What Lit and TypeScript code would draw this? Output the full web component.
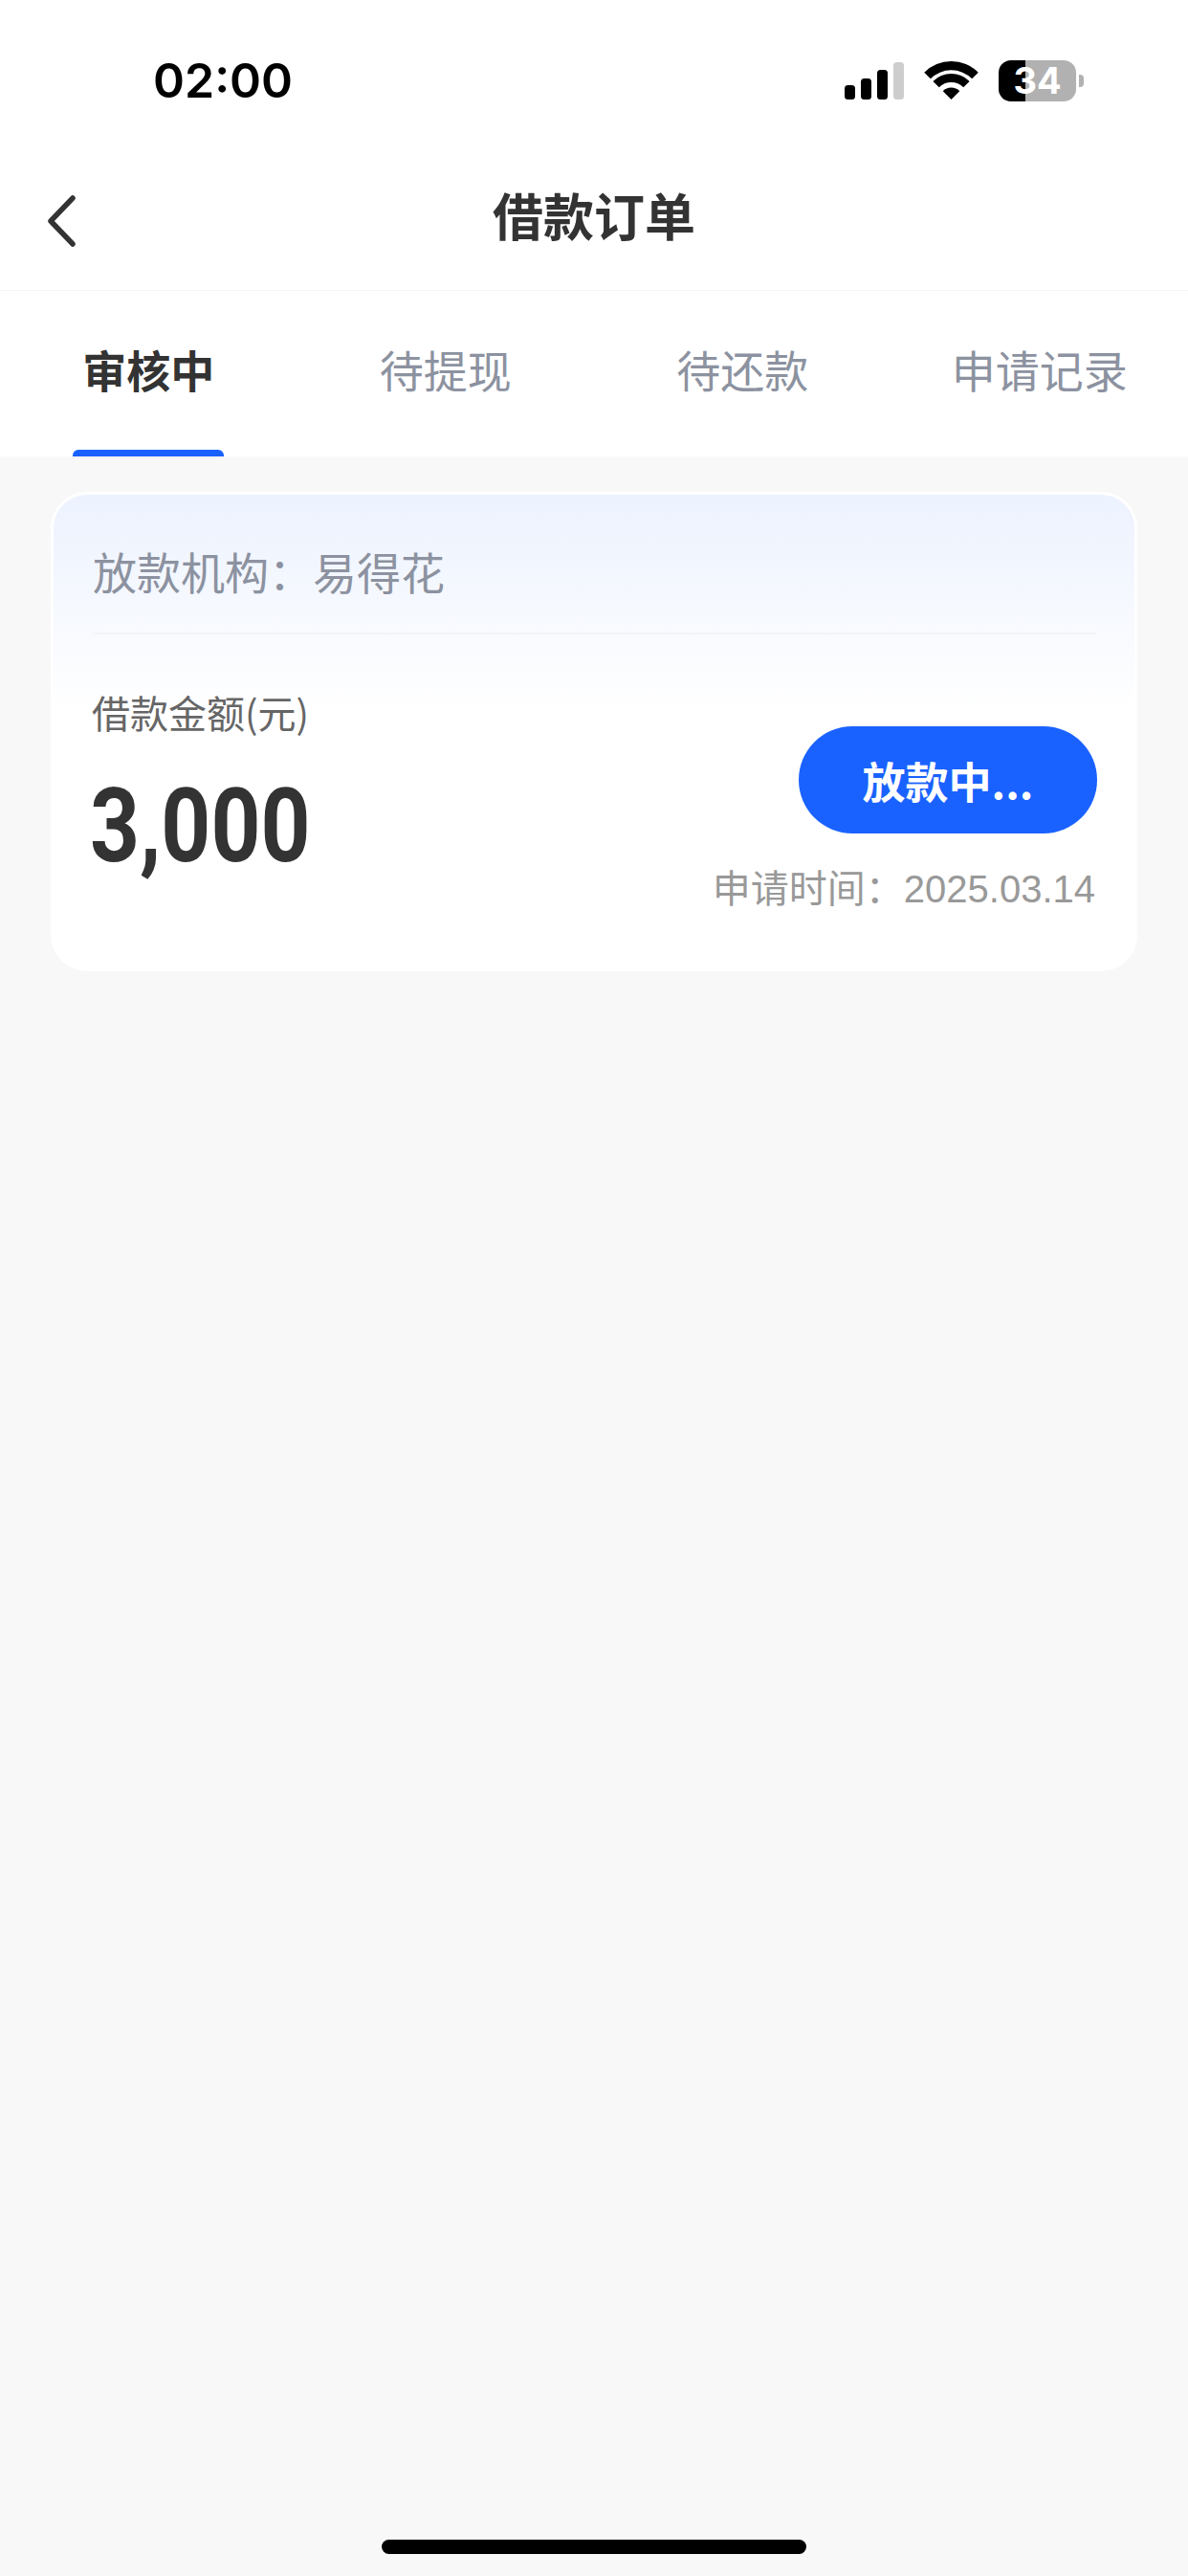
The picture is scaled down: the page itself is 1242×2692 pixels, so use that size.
import { LitElement, html, css, svg } from "lit";
import { customElement } from "lit/decorators.js";

const CJK = `"Noto Sans CJK SC", "Liberation Sans", sans-serif`;

@customElement("app-root")
export class AppRoot extends LitElement {
  static styles = css`
    :host {
      display: block;
      width: 1242px;
      font-family: "Liberation Sans", "Noto Sans CJK SC", sans-serif;
    }
    .page {
      width: 1242px;
      height: 2692px;
      display: flex;
      flex-direction: column;
      background: #f8f8f8;
    }
    .top { background: #fff; }
    .status {
      height: 152px;
      box-sizing: border-box;
      padding: 16px 109px 0 160px;
      display: flex;
      align-items: center;
      justify-content: space-between;
    }
    .time {
      font-family: Inter, sans-serif;
      font-size: 50px;
      font-weight: 600;
      line-height: 1;
      color: #000;
    }
    .sys { display: flex; align-items: center; gap: 22px; }
    .signal { display: flex; align-items: flex-end; gap: 6px; height: 39px; }
    .signal i { display: block; width: 11px; background: #000; border-radius: 3.5px; }
    .signal i.off { background: #cdcdcd; }
    .wifi { display: block; overflow: visible; }
    .batt { display: flex; align-items: center; gap: 3px; }
    .cell {
      width: 81px;
      height: 43px;
      border-radius: 13px;
      background: linear-gradient(90deg, #000 28px, #b1b1b1 28px);
      color: #fff;
      font-family: Inter, sans-serif;
      font-size: 38px;
      font-weight: 700;
      line-height: 43px;
      text-align: center;
    }
    .nub { width: 5px; height: 13px; background: #b1b1b1; border-radius: 0 4px 4px 0; }
    .nav {
      height: 151px;
      display: grid;
      grid-template-columns: 1fr auto 1fr;
      align-items: center;
      padding-left: 48px;
      padding-right: 48px;
      border-bottom: 1px solid #f5f5f5;
    }
    .back { display: block; margin-top: 6px; }
    .title {
      font-family: ${css([CJK] as any)};
      font-size: 53px;
      font-weight: 700;
      color: #333;
      line-height: 1;
      margin-bottom: 6px;
    }
    .tabs { display: flex; height: 173px; }
    .tab {
      position: relative;
      flex: 1;
      display: flex;
      align-items: center;
      justify-content: center;
      padding-bottom: 11px;
      box-sizing: border-box;
      font-family: ${css([CJK] as any)};
      font-size: 46px;
      color: #8c92a0;
    }
    .tab.on { color: #333; font-weight: 700; }
    .tab.on::after {
      content: "";
      position: absolute;
      left: 76px;
      width: 158px;
      bottom: 0;
      height: 7px;
      background: #1a62ff;
      border-radius: 6px 6px 0 0;
    }
    .main { flex: 1; padding: 37px 53px 0 53px; }
    .card {
      height: 501px;
      box-sizing: border-box;
      border: 3px solid #fff;
      border-radius: 38px;
      background: linear-gradient(180deg, #ecf2fe 0, #fff 46%);
      background-origin: border-box;
      padding: 0 39px 0 41px;
      display: flex;
      flex-direction: column;
    }
    .org {
      height: 146px;
      box-sizing: border-box;
      border-bottom: 2px solid #f2f4f8;
      display: flex;
      align-items: center;
      padding-top: 13px;
      font-family: ${css([CJK] as any)};
      font-size: 46px;
      color: #8c92a0;
    }
    .body { flex: 1; display: flex; justify-content: space-between; }
    .amt { padding-top: 53px; }
    .lbl {
      font-family: ${css([CJK] as any)};
      font-size: 40px;
      line-height: 56px;
      color: #666;
      margin-left: -1px;
    }
    .num {
      font-family: Roboto, sans-serif;
      font-size: 108px;
      font-weight: 700;
      line-height: 110px;
      margin-top: 36px;
      color: #333;
      transform: scaleX(0.84);
      transform-origin: left center;
      margin-left: -3px;
    }
    .side { display: flex; flex-direction: column; align-items: flex-end; padding-top: 96px; }
    .btn {
      width: 312px;
      height: 112px;
      border-radius: 56px;
      background: #1a62ff;
      color: #fff;
      display: flex;
      align-items: center;
      justify-content: center;
      font-family: ${css([CJK] as any)};
      font-size: 45px;
      font-weight: 700;
    }
    .date {
      margin-top: 30px;
      margin-right: 2px;
      font-family: "Liberation Sans", "Noto Sans CJK SC", sans-serif;
      font-size: 40px;
      line-height: 56px;
      color: #999;
    }
    .foot { display: flex; justify-content: center; padding-bottom: 23px; }
    .home { width: 444px; height: 15px; border-radius: 8px; background: #000; }
  `;

  render() {
    const tabs = ["审核中", "待提现", "待还款", "申请记录"];
    return html`
      <div class="page">
        <div class="top">
          <div class="status">
            <div class="time">02:00</div>
            <div class="sys">
              <div class="signal">
                <i style="height:15px"></i><i style="height:22px"></i><i style="height:31px"></i><i class="off" style="height:39px"></i>
              </div>
              <svg class="wifi" width="55" height="40" viewBox="0 0 55 40">
                ${svg`<path d="M-.78 11.72A40 40 0 0 1 55.78 11.72L49.2 18.3A30.7 30.7 0 0 0 5.8 18.3Z"/>
                <path d="M8.41 20.91A27 27 0 0 1 46.59 20.91L40.23 27.27A18 18 0 0 0 14.77 27.27Z"/>
                <path d="M18.73 31.23A12.4 12.4 0 0 1 36.27 31.23L27.5 40Z"/>`}
              </svg>
              <div class="batt"><div class="cell">34</div><div class="nub"></div></div>
            </div>
          </div>
          <div class="nav">
            <svg class="back" width="32" height="54" viewBox="0 0 32 54">
              <path d="M28 3 L5 27 L28 51" fill="none" stroke="#333" stroke-width="5.5" stroke-linecap="round" stroke-linejoin="round"/>
            </svg>
            <div class="title">借款订单</div>
            <div></div>
          </div>
          <div class="tabs">
            ${tabs.map((t, i) => html`<div class="tab ${i === 0 ? "on" : ""}">${t}</div>`)}
          </div>
        </div>
        <div class="main">
          <div class="card">
            <div class="org">放款机构：易得花</div>
            <div class="body">
              <div class="amt">
                <div class="lbl">借款金额(元)</div>
                <div class="num">3,000</div>
              </div>
              <div class="side">
                <div class="btn">放款中...</div>
                <div class="date">申请时间：2025.03.14</div>
              </div>
            </div>
          </div>
        </div>
        <div class="foot"><div class="home"></div></div>
      </div>
    `;
  }
}
